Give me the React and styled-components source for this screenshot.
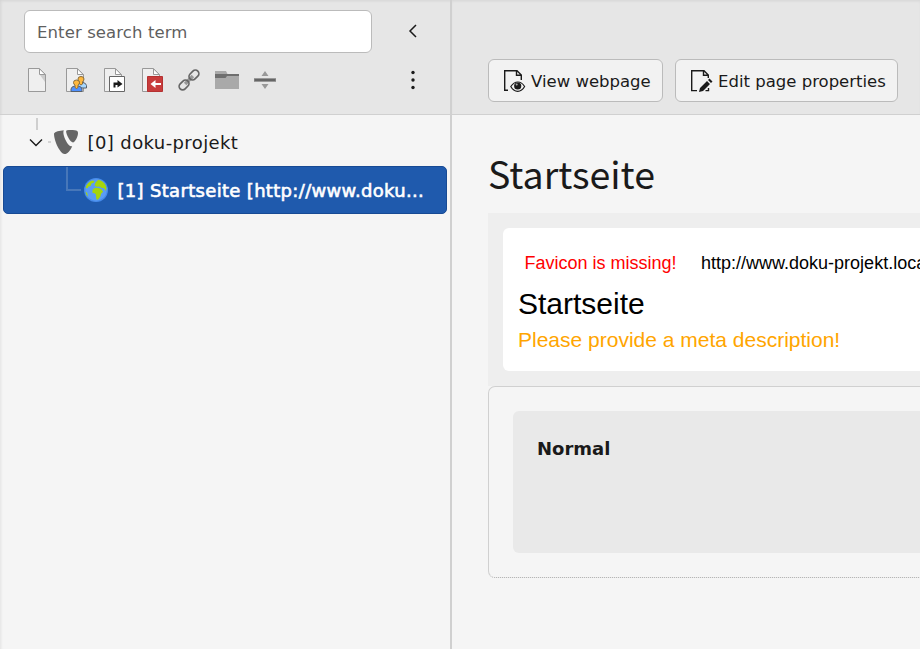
import React from "react";
import styled, { createGlobalStyle } from "styled-components";

const Global = createGlobalStyle`
  * { box-sizing: border-box; }
  html, body { margin: 0; height: 100%; overflow: hidden; }
  body { background: #f5f5f5; color: #1a1a1a; font-family: Verdana, "DejaVu Sans", sans-serif; }
  svg { display: block; flex: none; }
`;

const Shell = styled.div`
  display: grid;
  grid-template-columns: 452px 1fr;
  height: 649px;
  overflow: hidden;
`;
const Sidebar = styled.aside`
  background: #f5f5f5;
  border-right: 2px solid #d0d0d0;
  box-shadow: inset 3px 0 3px -2px rgba(0, 0, 0, 0.08);
`;
const SidebarHead = styled.div`
  height: 115px;
  background: #e6e6e6;
  border-bottom: 1px solid #d0d0d0;
  padding: 10px 24px 0;
  box-shadow: inset 2px 2px 3px -1px rgba(0, 0, 0, 0.08);
`;
const SearchRow = styled.div`
  display: flex;
  align-items: center;
`;
const Search = styled.input`
  width: 348px;
  height: 43px;
  border: 1px solid #bbb;
  border-radius: 6px;
  background: #fff;
  padding: 1px 12px 0;
  font: 16.5px/24px "DejaVu Sans", sans-serif;
  letter-spacing: 0.1px;
  outline: none;
  &::placeholder { color: #5f5f5f; opacity: 1; }
`;
const Collapse = styled.button`
  border: 0;
  background: none;
  padding: 0 0 2px;
  margin-left: 35px;
`;
const Tools = styled.div`
  display: flex;
  gap: 14px;
  align-items: center;
  margin: 15px 0 0 1px;
  height: 24px;
`;
const More = styled.div`
  margin-left: 120px;
`;
const Node = styled.div`
  display: flex;
  align-items: center;
  height: 48px;
  margin: ${(p) => (p.$selected ? "0 3px" : "3px 3px 0")};
  padding-left: ${(p) => (p.$selected ? 62 : 25)}px;
  border-radius: 5px;
  border: ${(p) => (p.$selected ? "1px solid #174a94" : "none")};
  color: ${(p) => (p.$selected ? "#fff" : "#1a1a1a")};
  background: ${(p) => (p.$selected ? "#1f5aad" : "transparent")};
`;
const NodeLabel = styled.span`
  font: 18px/24px "DejaVu Sans", sans-serif;
  -webkit-text-stroke: ${(p) => (p.$strong ? "0.6px currentColor" : "0")};
  letter-spacing: ${(p) => p.$track}px;
  margin-left: ${(p) => p.$gap}px;
  padding-top: 2px;
  white-space: pre;
`;
const Main = styled.main`
  min-width: 0;
  overflow: hidden;
`;
const MainHead = styled.header`
  display: flex;
  gap: 12px;
  height: 115px;
  padding: 59px 0 0 36px;
  background: #e6e6e6;
  border-bottom: 1px solid #d0d0d0;
  box-shadow: inset 0 2px 3px -1px rgba(0, 0, 0, 0.08);
`;
const Button = styled.button`
  display: flex;
  align-items: center;
  flex: none;
  gap: 5px;
  width: ${(p) => p.$width}px;
  height: 43px;
  padding: 0 0 0 13px;
  border: 1px solid #bbb;
  border-radius: 6px;
  background: #f2f2f2;
  color: #1a1a1a;
  font: 16.5px/24px "DejaVu Sans", sans-serif;
  white-space: nowrap;
`;
const ButtonText = styled.span`
  padding-top: 2px;
`;
const Content = styled.section`
  width: 620px;
  padding-left: 36px;
`;
const Title = styled.h1`
  margin: 0;
  padding-top: 28px;
  height: 98px;
  font: 400 37.5px/60px "Noto Sans CJK SC", sans-serif;
`;
const Preview = styled.div`
  background: #eee;
  padding: 15px;
  height: 173px;
  font-family: "Liberation Sans", Arial, sans-serif;
`;
const Card = styled.div`
  height: 143px;
  border-radius: 6px;
  background: #fff;
  color: #000;
  padding: 24px 15px 0;
  white-space: nowrap;
`;
const SiteLine = styled.div`
  display: flex;
  gap: 24.5px;
  padding-left: 6.5px;
  font-size: 18px;
  line-height: 22px;
`;
const Missing = styled.span`
  color: #f00;
`;
const PageName = styled.div`
  font-size: 30px;
  line-height: 36px;
  margin-top: 12px;
`;
const Description = styled.div`
  color: #ffa500;
  font-size: 21px;
  line-height: 24px;
  margin-top: 6px;
`;
const Grid = styled.div`
  height: 192px;
  padding: 24px;
  border: 1px solid #d0d0d0;
  border-bottom: 1px dotted #aaa;
  border-radius: 7px;
`;
const Column = styled.div`
  height: 142px;
  border-radius: 6px;
  background: #e9e9e9;
  padding: 26px 24px;
  font: bold 18px/24px "DejaVu Sans", sans-serif;
`;

const Icon = ({ children, size = 24 }) => (
  <svg width={size} height={size} viewBox="0 0 24 24" fill="none">{children}</svg>
);
const Sheet = () => (
  <>
    <path d="M3.500.5h11l6 6v17h-17z" fill="#efefef" stroke="#999" />
    <path d="M14.500.8v5.700h5.700z" fill="#fff" stroke="#999" />
  </>
);
const Person = ({ x, y, shirt }) => (
  <g transform={`translate(${x} ${y})`} stroke="#59616b" strokeWidth="1">
    <path d="M.5 12V9.500Q1 7 4 6.500h4q3 .5 3.500 3V12z" fill={shirt} />
    <path d="M4.500 8V5.800Q3 4.500 3 3q0-2.500 3-2.500T9 3q0 1.500-1.500 2.800V8Q6 10 4.500 8z" fill="#ffb83e" stroke="#886c3c" />
  </g>
);
const PageIcon = () => (
  <Icon>
    <path d="M3.500.5h11l6 6v17h-17z" fill="#efefef" stroke="#999" />
    <path d="M15 7h5v7z" fill="#ccc" />
    <path d="M14.500.8v5.700h5.700z" fill="#fff" stroke="#999" />
  </Icon>
);
const UsersIcon = () => (
  <Icon>
    <Sheet />
    <Person x={12} y={8} shirt="#a8d8ff" />
    <Person x={7.500} y={11.500} shirt="#4f91ff" />
  </Icon>
);
const ShortcutIcon = () => (
  <Icon>
    <Sheet />
    <path d="M8.500 8.500h15v15h-15z" fill="#fff" stroke="#666" />
    <path d="M12.500 19.500v-5h4V12l5 4-5 3.500v-2.500h-2v2.500z" fill="#1a1a1a" />
  </Icon>
);
const MountIcon = () => (
  <Icon>
    <Sheet />
    <path d="M8.500 8.500h15v15h-15z" fill="#c83c3c" stroke="#b53232" />
    <path d="m11.500 16 5-4v3H22v2h-5.500v3z" fill="#fff" />
  </Icon>
);
const LinkIcon = () => (
  <Icon>
    <g transform="rotate(-45 12 12)" strokeWidth="1.700" stroke="#666">
      <path d="M6.500 12h11" stroke="#999" strokeWidth="3.500" />
      <rect x="-.5" y="8.500" width="11" height="7" rx="3.500" />
      <rect x="13.500" y="8.500" width="11" height="7" rx="3.500" />
    </g>
  </Icon>
);
const FolderIcon = () => (
  <Icon>
    <path d="M0 3h11l1.500 3H24v15H0z" fill="#a9a9a9" />
    <path d="M0 6h24v2H12l-1.500 2H0z" fill="#6e6e6e" />
  </Icon>
);
const DividerIcon = () => (
  <Icon>
    <path d="M8.500 8 12 3l3.500 5zM8.500 16l3.500 5 3.500-5zM1 10h22v4H1z" fill="#999" />
    <path d="M1.500 11h21v2h-21z" fill="#666" />
  </Icon>
);
const ChevronLeft = () => (
  <svg width="12" height="14" viewBox="0 0 12 14" fill="none"><path d="M9 1 3 7l6 6" stroke="#1a1a1a" strokeWidth="1.500" /></svg>
);
const Dots = () => (
  <svg width="4" height="20" viewBox="0 0 4 20" fill="#1a1a1a">
    <circle cx="2" cy="2.500" r="1.700" /><circle cx="2" cy="10" r="1.700" /><circle cx="2" cy="17.500" r="1.700" />
  </svg>
);
const RootIcon = () => (
  <svg width="52" height="48" viewBox="0 0 52 48" fill="none">
    <path d="M9 0v12" stroke="#cfcfcf" strokeWidth="2" />
    <path d="m2 21.500 6 6 6-6" stroke="#1a1a1a" strokeWidth="1.400" />
    <path d="M20 24h3" stroke="#d4d4d4" strokeWidth="2" />
    <g fill="#666">
      <path d="M26 15.500c1-1.500 5.500-3 9.800-3.200-1 2 0 6.500 2 10.200 2 4 4.200 6.300 6.400 5.700-1.700 4-4.700 7.800-7.700 7.800C32.500 36 26 23.500 26 15.500z" />
      <path d="M39 12.200c4-.5 9-.1 10.200.8 1.300.9.900 4-.2 6.600-1 2.500-2.600 4.800-4 4.800-2.600 0-6.600-7-6.900-10.800q-.1-1.100.9-1.400z" />
    </g>
  </svg>
);
const BranchIcon = () => (
  <svg width="42" height="46" viewBox="0 0 42 46" fill="none">
    <path d="M1 0v23h14" stroke="#4777b9" strokeWidth="2" />
    <circle cx="30" cy="23" r="12" fill="#549cff" opacity=".75" />
    <circle cx="30" cy="23" r="10.700" fill="#5a9cf5" />
    <g fill="#a6d50c">
      <path d="M19.600 21c.7-3.500 3-6.500 6.500-7.600l2.400.6-.8 1.800-2.200.7-.8 2.500-2.200.5-1 1.700z" />
      <path d="M28.500 18.500l1.200-3.300 2.600-2.400c4 .8 7.300 3.700 8.200 8.200l-.7 3-1.600-2.800-2.400-.3-2.600-1.500-2.500.4z" />
      <path d="M26.500 22.800l2.600-2 3.400.2 3 1.200 1.600 2.600-2 1.900-.7 2.700-2.500 3.400-1.600-.5-.4-4.800-1.300-1.200-2.100-.3z" />
      <path d="M19.500 24.500l1.700 1.500.8 3.500-.7-.5q-1.500-2-1.800-4.500z" />
    </g>
  </svg>
);
const DocOutline = ({ d }) => <path d={d} stroke="#1a1a1a" strokeWidth="1.400" />;
const ViewIcon = () => (
  <Icon>
    <DocOutline d="M6 21.300H2.700V1.700H15L19.300 6v5M14.500 1.700V6.200h4.800" />
    <path d="M8.800 17.500q3-4.500 7-4.500t6.800 4.500Q20 22.300 15.700 22.300T8.800 17.500z" stroke="#1a1a1a" strokeWidth="1.200" />
    <circle cx="15.700" cy="17" r="3.600" fill="#1a1a1a" />
    <circle cx="14.700" cy="15.500" r="1" fill="#aaa" />
  </Icon>
);
const EditIcon = () => (
  <Icon>
    <DocOutline d="M8 21.600H2.700V1.700H15L19.300 6v3M14.500 1.700V6.200h4.800M16.500 21.600h3v-2.600" />
    <path d="m10 23 1-4 7-7 3 3-7 7zM19 11l1.500-1.500 3 3L22 14z" fill="#1a1a1a" />
  </Icon>
);

export default function App() {
  return (
    <>
      <Global />
      <Shell>
        <Sidebar>
          <SidebarHead>
            <SearchRow>
              <Search placeholder="Enter search term" />
              <Collapse aria-label="Collapse"><ChevronLeft /></Collapse>
            </SearchRow>
            <Tools>
              <PageIcon />
              <UsersIcon />
              <ShortcutIcon />
              <MountIcon />
              <LinkIcon />
              <FolderIcon />
              <DividerIcon />
              <More><Dots /></More>
            </Tools>
          </SidebarHead>
          <Node>
            <RootIcon />
            <NodeLabel $gap={7.5} $track={0.4}>[0] doku-projekt</NodeLabel>
          </Node>
          <Node $selected>
            <BranchIcon />
            <NodeLabel $strong $gap={9.5} $track={0.32}>[1] Startseite [http://www.doku...</NodeLabel>
          </Node>
        </Sidebar>
        <Main>
          <MainHead>
            <Button $width={175}><ViewIcon /><ButtonText>View webpage</ButtonText></Button>
            <Button $width={223}><EditIcon /><ButtonText>Edit page properties</ButtonText></Button>
          </MainHead>
          <Content>
            <Title>Startseite</Title>
            <Preview>
              <Card>
                <SiteLine>
                  <Missing>Favicon is missing!</Missing>
                  <span>http://www.doku-projekt.local</span>
                </SiteLine>
                <PageName>Startseite</PageName>
                <Description>Please provide a meta description!</Description>
              </Card>
            </Preview>
            <Grid>
              <Column>Normal</Column>
            </Grid>
          </Content>
        </Main>
      </Shell>
    </>
  );
}
